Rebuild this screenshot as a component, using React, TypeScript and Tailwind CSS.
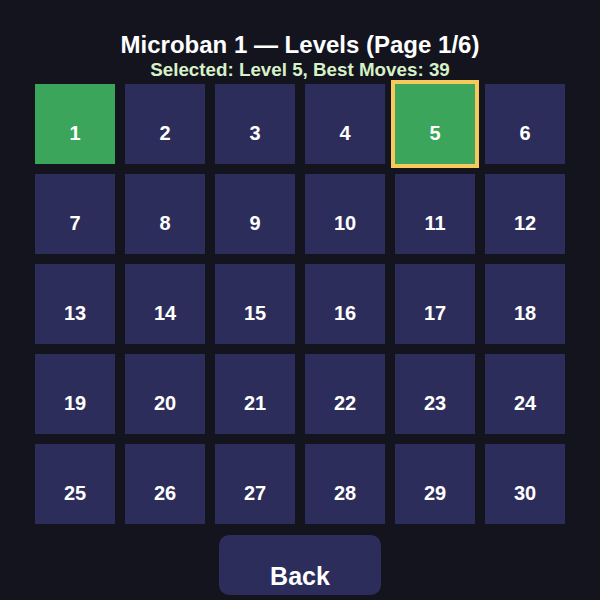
import React from "react";

export default function App() {
  const levels = Array.from({ length: 30 }, (_, i) => i + 1);
  return (
    <div
      className="w-[600px] h-[600px] bg-[#14141f] flex flex-col items-center overflow-hidden"
      style={{ fontFamily: '"Liberation Sans", Arial, sans-serif' }}
    >
      <div className="mt-[32px] h-[26px] leading-[26px] text-[24px] font-bold text-white whitespace-nowrap">
        Microban 1 — Levels (Page 1/6)
      </div>
      <div className="mt-[2px] h-[20px] leading-[20px] text-[18.8px] font-bold text-[#d6f2c6] whitespace-nowrap">
        Selected: Level 5, Best Moves: 39
      </div>
      <div className="mt-[4px] grid grid-cols-6 gap-[10px]">
        {levels.map((n) => {
          const green = n === 1 || n === 5;
          const selected = n === 5;
          return (
            <div
              key={n}
              className={
                "w-[80px] h-[80px] flex items-center justify-center text-[20px] font-bold text-white " +
                (green ? "bg-[#3ba55c] " : "bg-[#2c2d5b] ") +
                (selected ? "outline-[4px] outline-solid outline-[#f7c95a]" : "")
              }
            >
              <span className="mt-[17px]">{n}</span>
            </div>
          );
        })}
      </div>
      <div className="mt-[11px] w-[162px] h-[60px] rounded-[10px] bg-[#2c2d5b] flex justify-center pt-[26px]">
        <span className="text-[25px] leading-[30px] font-bold text-white">Back</span>
      </div>
    </div>
  );
}
